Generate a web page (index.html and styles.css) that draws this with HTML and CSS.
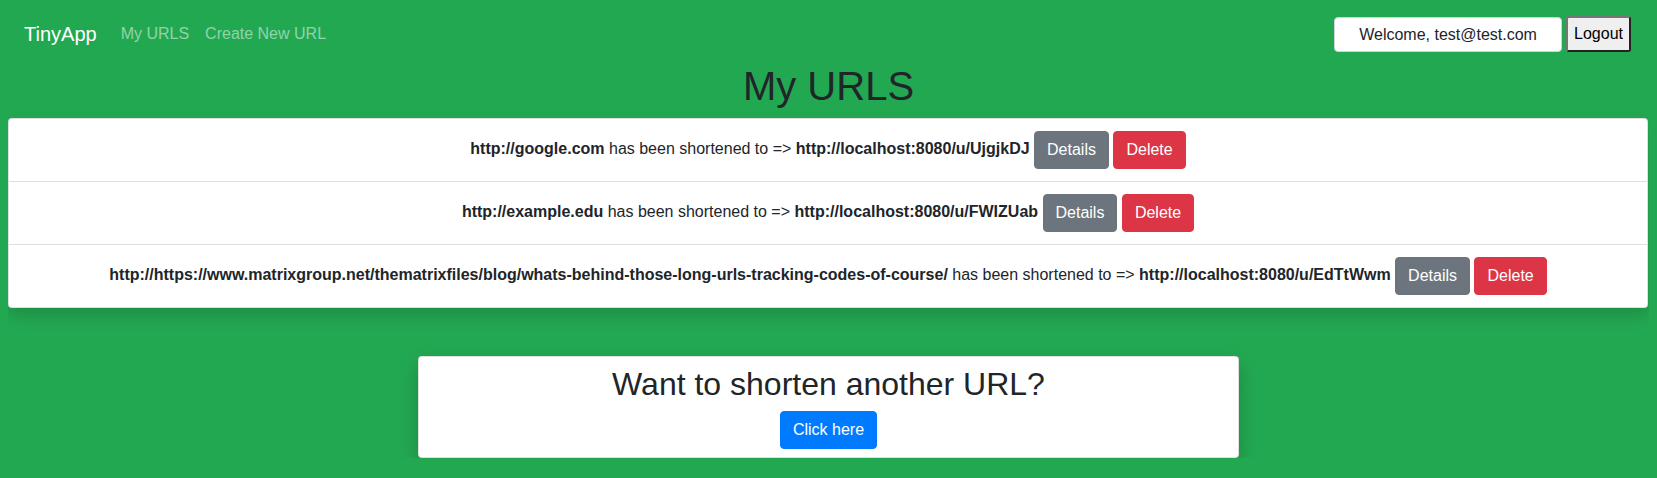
FILE: index.html
```html
<!DOCTYPE html>
<html lang="en">
<head>
<meta charset="utf-8">
<title>TinyApp</title>
<link rel="stylesheet" href="styles.css">
</head>
<body>
  <nav class="navbar">
    <div class="nav-left">
      <a class="brand" href="#">TinyApp</a>
      <a class="nav-link" href="#">My URLS</a>
      <a class="nav-link" href="#">Create New URL</a>
    </div>
    <div class="nav-right">
      <div class="welcome">Welcome, test@test.com</div>
      <button class="logout">Logout</button>
    </div>
  </nav>

  <h1 class="page-title">My URLS</h1>

  <div class="card url-list">
    <div class="url-row">
      <b>http://google.com</b> has been shortened to =&gt; <b>http://localhost:8080/u/UjgjkDJ</b>
      <a class="btn btn-secondary" href="#">Details</a>
      <a class="btn btn-danger" href="#">Delete</a>
    </div>
    <div class="url-row">
      <b>http://example.edu</b> has been shortened to =&gt; <b>http://localhost:8080/u/FWIZUab</b>
      <a class="btn btn-secondary" href="#">Details</a>
      <a class="btn btn-danger" href="#">Delete</a>
    </div>
    <div class="url-row">
      <b>http://https://www.matrixgroup.net/thematrixfiles/blog/whats-behind-those-long-urls-tracking-codes-of-course/</b> has been shortened to =&gt; <b>http://localhost:8080/u/EdTtWwm</b>
      <a class="btn btn-secondary" href="#">Details</a>
      <a class="btn btn-danger" href="#">Delete</a>
    </div>
  </div>

  <div class="card cta">
    <h2 class="cta-title">Want to shorten another URL?</h2>
    <a class="btn btn-primary" href="#">Click here</a>
  </div>
</body>
</html>
```

FILE: styles.css
```css
html, body {
  background: #23a852;
}
body {
  margin: 8px;
  font-family: "Liberation Sans", Arial, sans-serif;
  font-size: 16px;
  line-height: 1.5;
  color: #212529;
}
a { text-decoration: none; }

.navbar {
  display: flex;
  align-items: center;
  justify-content: space-between;
  padding: 8px 18px 8px 16px;
}
.nav-left {
  display: flex;
  align-items: center;
}
.brand {
  color: #fff;
  font-size: 20px;
  line-height: 30px;
  margin-right: 16px;
}
.nav-link {
  color: rgba(255, 255, 255, 0.5);
  padding: 0 8px;
  line-height: 24px;
}
.nav-right {
  display: flex;
  align-items: center;
  gap: 4px;
}
.welcome {
  background: #fff;
  border: 1px solid #ced4da;
  border-radius: 4px;
  height: 35px;
  box-sizing: border-box;
  padding: 0;
  line-height: 33px;
  width: 228px;
  white-space: nowrap;
  text-align: center;
  color: #212529;
}
.logout {
  font-family: "Liberation Sans", Arial, sans-serif;
  font-size: 16px;
  line-height: 18px;
  height: 36px;
  padding: 0 6px;
  background: #efefef;
  color: #000;
  border: 2px solid;
  border-color: #767676 #222 #222 #767676;
  border-radius: 3px;
}

.page-title {
  margin: 2px 0 8px;
  font-size: 40px;
  font-weight: 500;
  line-height: 1.2;
  text-align: center;
  color: #212529;
}

.card {
  background: #fff;
  border: 1px solid rgba(0, 0, 0, 0.125);
  border-radius: 4px;
  box-shadow: 0 8px 16px rgba(0, 0, 0, 0.15);
}
.url-list {
  margin-right: 1px;
}
.url-row {
  padding: 12px 20px;
  text-align: center;
  border-bottom: 1px solid rgba(0, 0, 0, 0.125);
}
.url-row:last-child { border-bottom: 0; }
.url-row b { font-weight: 700; }

.btn {
  display: inline-block;
  padding: 6px 12px;
  font-size: 16px;
  line-height: 24px;
  border: 1px solid transparent;
  border-radius: 4px;
  color: #fff;
  vertical-align: middle;
}
.btn-secondary { background: #6c757d; border-color: #6c757d; }
.btn-danger { background: #dc3545; border-color: #dc3545; }
.btn-primary { background: #007bff; border-color: #007bff; }

.cta {
  width: 50%;
  margin: 48px auto 0;
  padding: 8px;
  box-sizing: border-box;
  text-align: center;
  box-shadow: 0 8px 20px rgba(0, 0, 0, 0.2);
}
.cta-title {
  margin: 0 0 8px;
  font-size: 32px;
  font-weight: 500;
  line-height: 1.2;
}
```
